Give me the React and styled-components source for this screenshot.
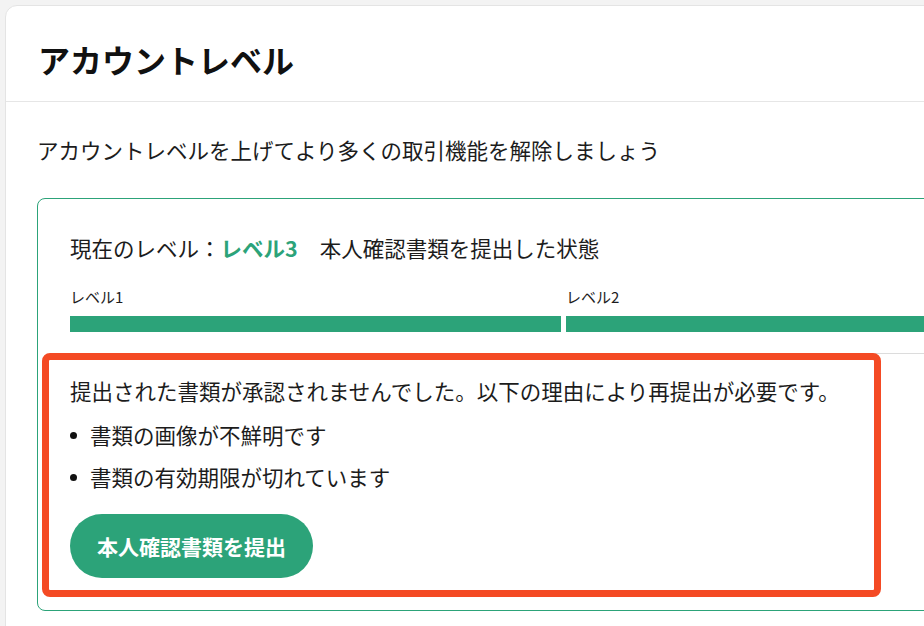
import React from "react";
import styled, { createGlobalStyle } from "styled-components";

const GREEN = "#2ca379";

const Global = createGlobalStyle`
  html, body {
    margin: 0;
    padding: 0;
    background: #f3f3f3;
    overflow: hidden;
  }
  body {
    font-family: "Noto Sans CJK JP", "Noto Sans", "Liberation Sans", sans-serif;
    color: #1c1c1c;
  }
  * { box-sizing: border-box; }
`;

const Page = styled.div`
  padding: 5px 0 0 5px;
`;

const Card = styled.section`
  width: 1613px;
  background: #fff;
  border: 1px solid #e4e4e4;
  border-radius: 12px;
  padding-bottom: 32px;
`;

const Header = styled.header`
  padding: 29px 32px 18px;
  border-bottom: 1px solid #e6e6e6;
`;

const Title = styled.h1`
  margin: 0;
  font-size: 32px;
  line-height: 48px;
  font-weight: 700;
  color: #111;
`;

const Body = styled.div`
  padding: 32px 31px 0;
`;

const Lead = styled.p`
  margin: 0 0 32px;
  font-size: 21.5px;
  line-height: 32px;
`;

const LevelCard = styled.div`
  border: 1px solid ${GREEN};
  border-radius: 8px;
  padding: 33px 32px 32px;
`;

const Current = styled.p`
  margin: 0;
  font-size: 21.5px;
  line-height: 32px;
  white-space: nowrap;
`;

const LevelName = styled.strong`
  color: ${GREEN};
  font-weight: 700;
`;

const LevelDesc = styled.span`
  margin-left: 22px;
`;

const Levels = styled.div`
  margin-top: 22px;
  display: grid;
  grid-template-columns: repeat(3, 491px);
  column-gap: 5px;
`;

const Step = styled.div`
  display: flex;
  flex-direction: column;
`;

const StepLabel = styled.span`
  align-self: flex-start;
  font-size: 15px;
  line-height: 22px;
`;

const StepBar = styled.div`
  margin-top: 8px;
  height: 16px;
  background: ${(p) => (p.$done ? GREEN : "#e3e3e3")};
`;

const Panel = styled.div`
  position: relative;
  margin-top: 21px;
  border-top: 1px solid #dcdcdc;
  padding-top: 21px;
`;

const Highlight = styled.div`
  position: absolute;
  top: -1px;
  left: -28px;
  width: 839px;
  height: 244px;
  border: 7px solid #f44a24;
  border-radius: 8px;
  pointer-events: none;
`;

const Message = styled.p`
  margin: 0;
  font-size: 21.5px;
  line-height: 32px;
  white-space: nowrap;
`;

const Reasons = styled.ul`
  margin: 12px 0 0;
  padding: 0;
  list-style: none;
  display: flex;
  flex-direction: column;
  gap: 10px;
`;

const Reason = styled.li`
  display: flex;
  align-items: center;
  gap: 13px;
  font-size: 21.5px;
  line-height: 32px;
`;

const Dot = styled.span`
  width: 7px;
  height: 7px;
  border-radius: 50%;
  background: #111;
  flex: none;
`;

const SubmitButton = styled.button`
  margin-top: 21px;
  height: 64px;
  padding: 0 27px;
  border: none;
  border-radius: 32px;
  background: ${GREEN};
  color: #fff;
  font-family: inherit;
  font-size: 21px;
  font-weight: 700;
  cursor: pointer;
`;

const steps = [
  { label: "レベル1", done: true },
  { label: "レベル2", done: true },
  { label: "レベル3", done: true },
];

export default function App() {
  return (
    <Page>
      <Global />
      <Card>
        <Header>
          <Title>アカウントレベル</Title>
        </Header>
        <Body>
          <Lead>アカウントレベルを上げてより多くの取引機能を解除しましょう</Lead>
          <LevelCard>
            <Current>
              現在のレベル：<LevelName>レベル3</LevelName>
              <LevelDesc>本人確認書類を提出した状態</LevelDesc>
            </Current>
            <Levels>
              {steps.map((s) => (
                <Step key={s.label}>
                  <StepLabel>{s.label}</StepLabel>
                  <StepBar $done={s.done} />
                </Step>
              ))}
            </Levels>
            <Panel>
              <Highlight />
              <Message>
                提出された書類が承認されませんでした。以下の理由により再提出が必要です。
              </Message>
              <Reasons>
                <Reason>
                  <Dot />
                  書類の画像が不鮮明です
                </Reason>
                <Reason>
                  <Dot />
                  書類の有効期限が切れています
                </Reason>
              </Reasons>
              <SubmitButton>本人確認書類を提出</SubmitButton>
            </Panel>
          </LevelCard>
        </Body>
      </Card>
    </Page>
  );
}
